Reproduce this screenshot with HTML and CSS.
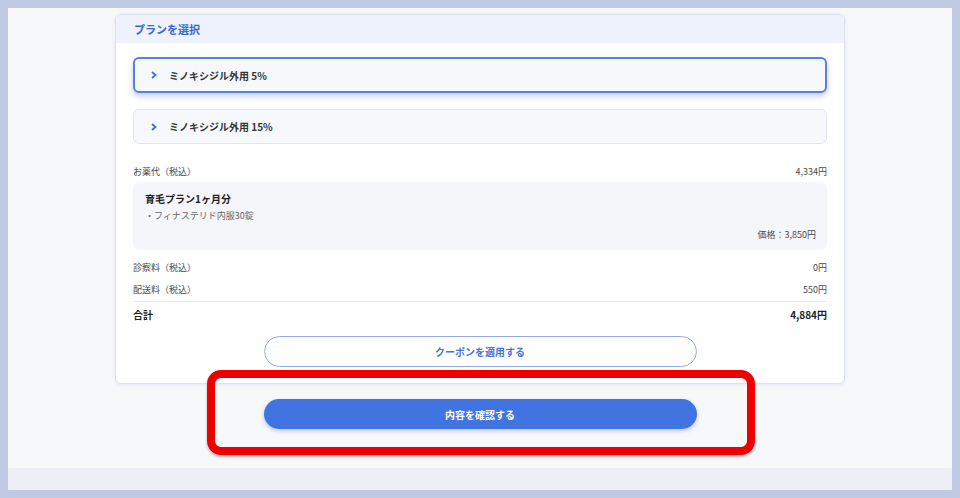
FILE: index.html
```html
<!DOCTYPE html>
<html lang="ja">
  <head>
    <meta charset="UTF-8" />
    <meta name="viewport" content="width=device-width, initial-scale=1.0" />
    <title>プランを選択</title>
    <link rel="stylesheet" href="styles.css">
  </head>
  <body>
    <div class="screen">
      <div class="main">
        <!-- Plan card -->
        <div class="card">
          <div class="card-head">プランを選択</div>
          <div class="card-body">
            <div class="option selected">
              <svg class="chevron" width="6" height="8" viewBox="0 0 6 8"><path d="M1 1 L4.5 4 L1 7" fill="none" stroke="#3f6fdc" stroke-width="1.8"/></svg>
              <span>ミノキシジル外用 5%</span>
            </div>
            <div class="option">
              <svg class="chevron" width="6" height="8" viewBox="0 0 6 8"><path d="M1 1 L4.5 4 L1 7" fill="none" stroke="#3f6fdc" stroke-width="1.8"/></svg>
              <span>ミノキシジル外用 15%</span>
            </div>

            <div class="row first">
              <span>お薬代（税込）</span>
              <span>4,334円</span>
            </div>
            <div class="item-box">
              <div class="item-title">育毛プラン1ヶ月分</div>
              <div class="item-sub">・フィナステリド内服30錠</div>
              <div class="item-price">価格：3,850円</div>
            </div>
            <div class="row gap">
              <span>診察料（税込）</span>
              <span>0円</span>
            </div>
            <div class="row">
              <span>配送料（税込）</span>
              <span>550円</span>
            </div>
            <div class="row total">
              <span>合計</span>
              <span>4,884円</span>
            </div>
            <button class="btn-coupon">クーポンを適用する</button>
          </div>
        </div>

        <div class="confirm-wrap">
          <button class="btn-confirm">内容を確認する</button>
          <div class="highlight"></div>
        </div>
      </div>
      <div class="footer-band"></div>
    </div>
  </body>
</html>
```

FILE: styles.css
```css
body {
  margin: 0;
  background: #c1cae4;
  font-family: "Noto Sans CJK JP", "Noto Sans", sans-serif;
  color: #333;
}

.screen {
  margin: 8px;
  height: 482px;
  display: flex;
  flex-direction: column;
}

.main {
  background: #f7f8fa;
  height: 460px;
  padding-top: 6px;
  box-sizing: border-box;
}

.footer-band {
  background: #edf0f7;
  height: 22px;
}

.card {
  width: 730px;
  margin: 0 auto;
  background: #fff;
  border: 1px solid #dbe1f1;
  border-radius: 6px;
  box-shadow: 0 1px 4px rgba(120, 135, 190, 0.15);
  box-sizing: border-box;
  overflow: hidden;
}

.card-head {
  background: #edf2fc;
  height: 28px;
  line-height: 28px;
  padding-left: 18px;
  font-size: 11px;
  font-weight: bold;
  color: #3b66d1;
}

.card-body {
  padding: 14px 17px 16px;
  display: flex;
  flex-direction: column;
}

.option {
  height: 35px;
  box-sizing: border-box;
  border: 1px solid #e1e5f1;
  border-radius: 6px;
  background: #f7f8fb;
  display: flex;
  align-items: center;
  padding-left: 17px;
  font-size: 10px;
  font-weight: bold;
  color: #333;
}

.option + .option {
  margin-top: 16px;
}

.option.selected {
  height: 36px;
  border: 2px solid #5580e6;
  padding-left: 16px;
  box-shadow: 0 3px 6px rgba(60, 90, 200, 0.3);
}

.chevron {
  margin-right: 12px;
}

.row {
  height: 22px;
  display: flex;
  justify-content: space-between;
  align-items: center;
  font-size: 9px;
  color: #4a4a4a;
}

.row.first {
  margin-top: 16px;
}

.row.gap {
  margin-top: 6px;
}

.item-box {
  background: #f5f6f9;
  border-radius: 6px;
  height: 68px;
  box-sizing: border-box;
  padding: 9px 11px 0 12px;
  font-size: 9px;
}

.item-title {
  line-height: 16px;
  font-size: 10px;
  font-weight: bold;
  color: #222;
}

.item-sub {
  margin-top: 1px;
  line-height: 16px;
  color: #666;
}

.item-price {
  margin-top: 3px;
  line-height: 16px;
  text-align: right;
  color: #4a4a4a;
}

.row.total {
  height: 24px;
  margin-top: 1px;
  border-top: 1px solid #e5e9f5;
  font-size: 10px;
  font-weight: bold;
  color: #222;
}

.btn-coupon {
  align-self: center;
  width: 433px;
  height: 31px;
  margin-top: 10px;
  background: #fff;
  border: 1px solid #93ace9;
  border-radius: 16px;
  font-family: inherit;
  font-size: 10px;
  font-weight: bold;
  color: #4472dd;
}

.confirm-wrap {
  position: relative;
  display: flex;
  justify-content: center;
  margin-top: 15px;
}

.btn-confirm {
  width: 433px;
  height: 30px;
  background: #4174e0;
  border: none;
  border-radius: 15px;
  box-shadow: 0 2px 4px rgba(50, 80, 180, 0.3);
  font-family: inherit;
  font-size: 10px;
  font-weight: bold;
  color: #fff;
}

.highlight {
  position: absolute;
  left: 199px;
  top: -29px;
  width: 548px;
  height: 85px;
  box-sizing: border-box;
  border: 8px solid #ee0000;
  border-radius: 14px;
  box-shadow: 0 2px 3px rgba(0, 0, 0, 0.25);
}
```
